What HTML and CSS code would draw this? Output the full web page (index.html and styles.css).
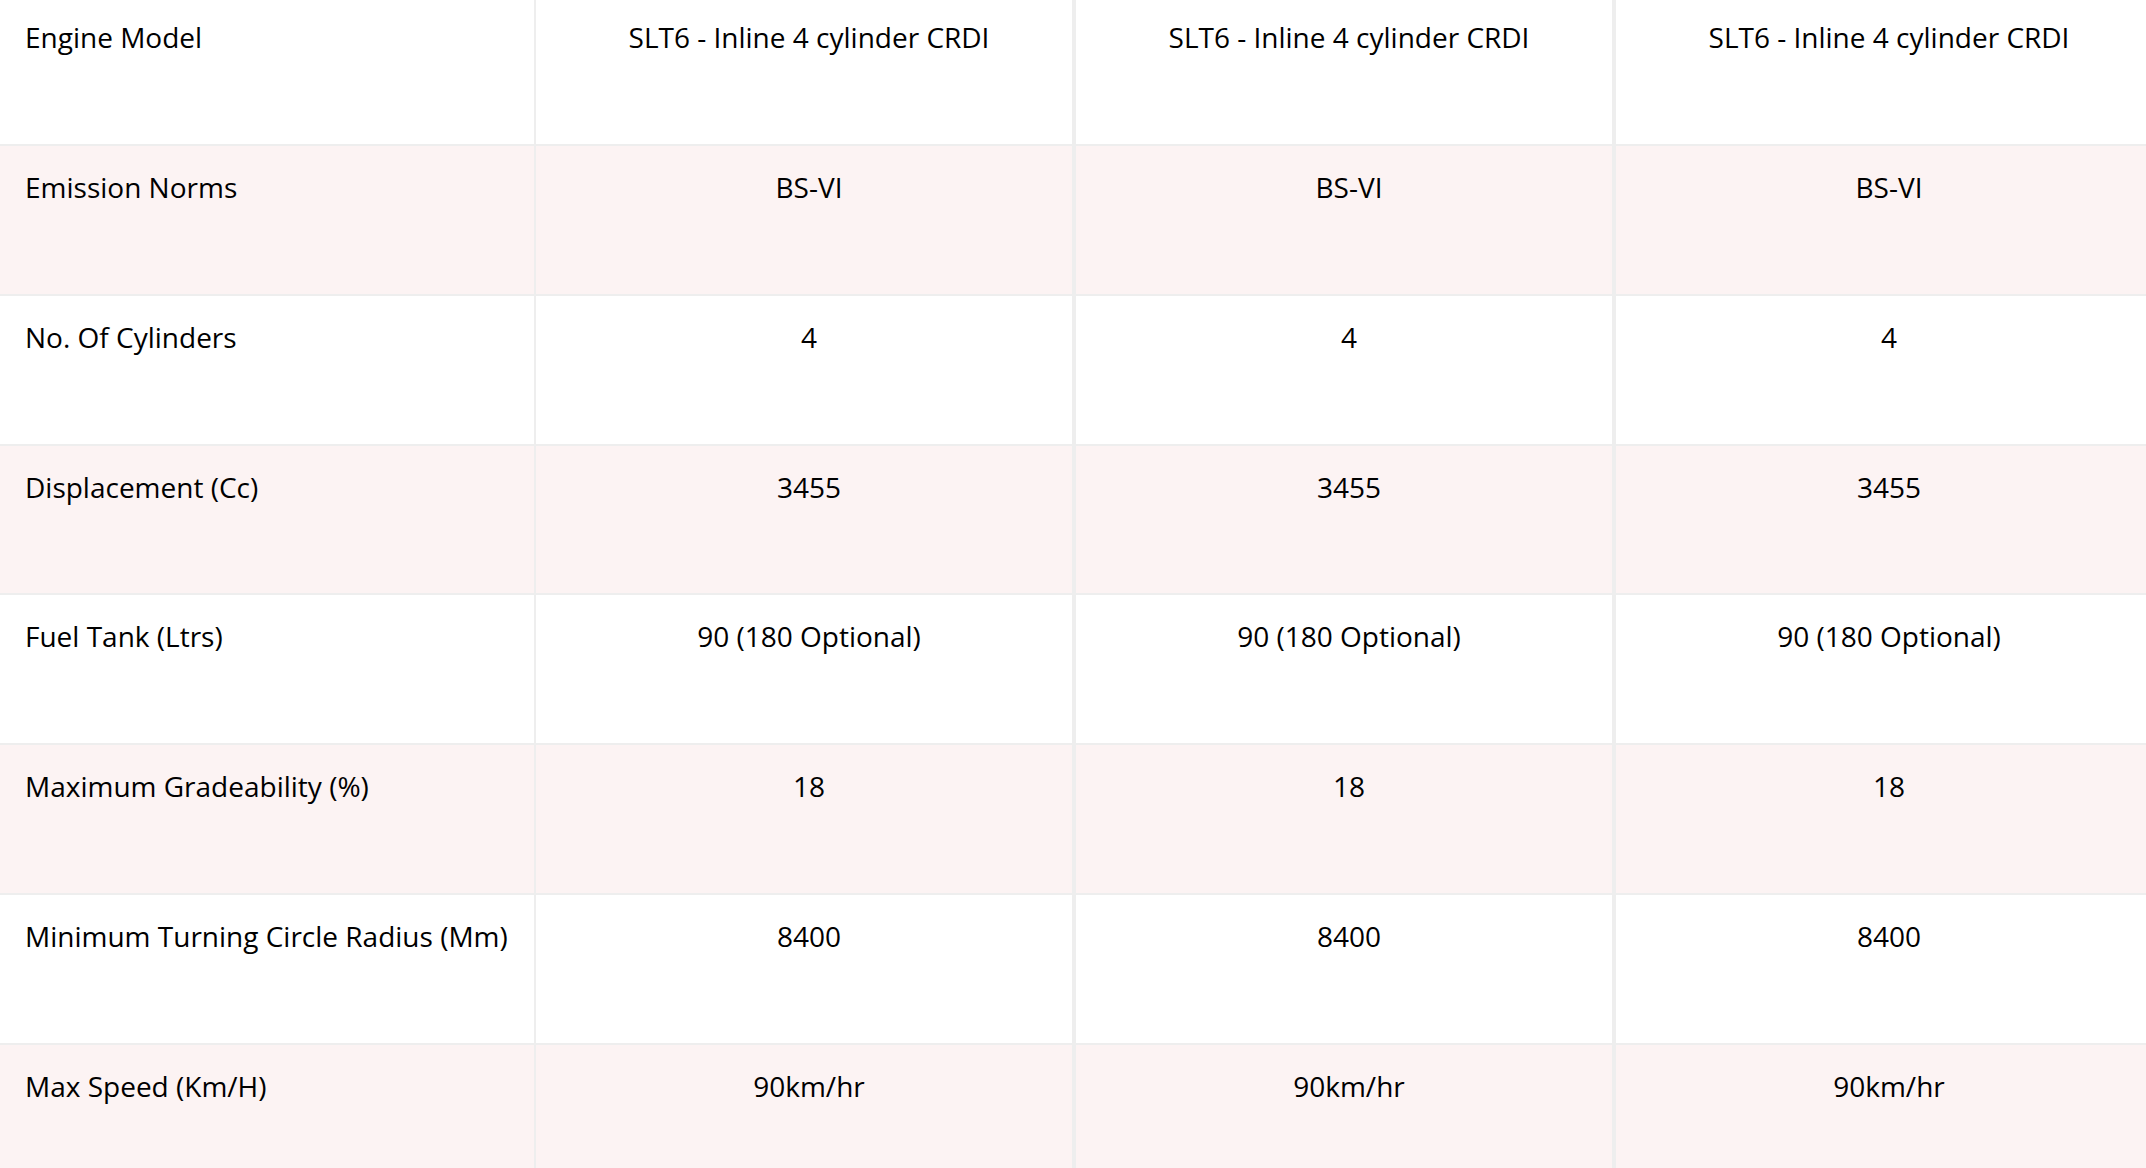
FILE: index.html
```html
<!DOCTYPE html>
<html lang="en">
<head>
<meta charset="utf-8">
<title>Specifications</title>
<link rel="stylesheet" href="styles.css">
</head>
<body>
<div class="spec-table">
  <div class="spec-row">
    <div class="spec-label">Engine Model</div>
    <div class="spec-value">SLT6 - Inline 4 cylinder CRDI</div>
    <div class="spec-value">SLT6 - Inline 4 cylinder CRDI</div>
    <div class="spec-value">SLT6 - Inline 4 cylinder CRDI</div>
  </div>
  <div class="spec-row alt">
    <div class="spec-label">Emission Norms</div>
    <div class="spec-value">BS-VI</div>
    <div class="spec-value">BS-VI</div>
    <div class="spec-value">BS-VI</div>
  </div>
  <div class="spec-row">
    <div class="spec-label">No. Of Cylinders</div>
    <div class="spec-value">4</div>
    <div class="spec-value">4</div>
    <div class="spec-value">4</div>
  </div>
  <div class="spec-row alt">
    <div class="spec-label">Displacement (Cc)</div>
    <div class="spec-value">3455</div>
    <div class="spec-value">3455</div>
    <div class="spec-value">3455</div>
  </div>
  <div class="spec-row">
    <div class="spec-label">Fuel Tank (Ltrs)</div>
    <div class="spec-value">90 (180 Optional)</div>
    <div class="spec-value">90 (180 Optional)</div>
    <div class="spec-value">90 (180 Optional)</div>
  </div>
  <div class="spec-row alt">
    <div class="spec-label">Maximum Gradeability (%)</div>
    <div class="spec-value">18</div>
    <div class="spec-value">18</div>
    <div class="spec-value">18</div>
  </div>
  <div class="spec-row">
    <div class="spec-label">Minimum Turning Circle Radius (Mm)</div>
    <div class="spec-value">8400</div>
    <div class="spec-value">8400</div>
    <div class="spec-value">8400</div>
  </div>
  <div class="spec-row alt">
    <div class="spec-label">Max Speed (Km/H)</div>
    <div class="spec-value">90km/hr</div>
    <div class="spec-value">90km/hr</div>
    <div class="spec-value">90km/hr</div>
  </div>
</div>
</body>
</html>
```
FILE: styles.css
```css
html, body {
  margin: 0;
  padding: 0;
  background: #ffffff;
  overflow: hidden;
}

body {
  font-family: "Open Sans", "Noto Sans", sans-serif;
  font-size: 28px;
  color: #000000;
}

.spec-table {
  width: 2154px;
  margin-top: -3.8px;
}

.spec-row {
  display: grid;
  grid-template-columns: 534px 540px 540px 540px;
  height: 149.8px;
  box-sizing: border-box;
  border-bottom: 2px solid #eeeeee;
  background: #ffffff;
}

.spec-row.alt {
  background: #fcf3f3;
}

.spec-label,
.spec-value {
  padding: 20px 24px 20px 25px;
  line-height: 42px;
  box-sizing: border-box;
}

.spec-value {
  text-align: center;
  padding-left: 30px;
  padding-right: 20px;
  border-left: 2px solid #eeeeee;
  border-right: 2px solid #eeeeee;
}
```
